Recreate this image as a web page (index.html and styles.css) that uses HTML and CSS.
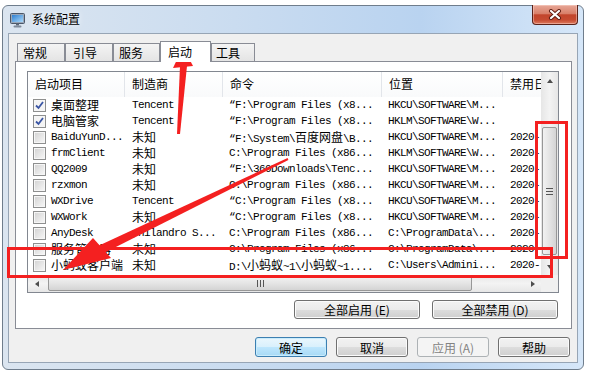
FILE: index.html
```html
<!DOCTYPE html>
<html lang="zh-CN">
<head>
  <meta charset="UTF-8">
  <title>系统配置</title>
  <link rel="stylesheet" href="styles.css">
</head>
<body>

  <div class="window">
    <div class="titlebar">
      <svg class="app-icon" width="16" height="16" viewBox="0 0 16 16">
        <defs>
          <linearGradient id="scr" x1="0" y1="0" x2="1" y2="1">
            <stop offset="0" stop-color="#2f7fd0"/>
            <stop offset="1" stop-color="#a9d8fa"/>
          </linearGradient>
        </defs>
        <rect x="0.5" y="1.5" width="14" height="10" rx="1" fill="#9aa7b8" stroke="#4a5668"/>
        <rect x="2" y="3" width="11" height="7" fill="url(#scr)"/>
        <rect x="6" y="11.5" width="3" height="2" fill="#5d6878"/>
        <rect x="3.5" y="13.5" width="8" height="2" rx="1" fill="#7f8a9a"/>
      </svg>
      <span class="title">系统配置</span>
      <div class="close-btn">
        <svg width="14" height="11" viewBox="0 0 14 11">
          <path d="M3 2 L11 9 M11 2 L3 9" stroke="#5b1a10" stroke-width="4" stroke-linecap="round"/>
          <path d="M3 2 L11 9 M11 2 L3 9" stroke="#ffffff" stroke-width="2.2" stroke-linecap="round"/>
        </svg>
      </div>
    </div>

    <div class="client">
      <div class="tabs">
        <div class="tab t1">常规</div>
        <div class="tab t2">引导</div>
        <div class="tab t3">服务</div>
        <div class="tab t4 active">启动</div>
        <div class="tab t5">工具</div>
      </div>

      <div class="panel">
        <div class="listview">
          <div class="lv-main">
            <div class="lv-row lv-head">
              <div class="hcell">启动项目</div>
              <div class="hcell">制造商</div>
              <div class="hcell">命令</div>
              <div class="hcell">位置</div>
              <div class="hcell">禁用日</div>
            </div>

            <div class="lv-row">
              <div class="cell first"><span class="check on"></span>桌面整理</div>
              <div class="cell m">Tencent</div>
              <div class="cell m">“F:\Program Files (x8...</div>
              <div class="cell m">HKCU\SOFTWARE\M...</div>
              <div class="cell m"></div>
            </div>
            <div class="lv-row">
              <div class="cell first"><span class="check on"></span>电脑管家</div>
              <div class="cell m">Tencent</div>
              <div class="cell m">“F:\Program Files (x8...</div>
              <div class="cell m">HKLM\SOFTWARE\W...</div>
              <div class="cell m"></div>
            </div>
            <div class="lv-row">
              <div class="cell first m"><span class="check"></span>BaiduYunD...</div>
              <div class="cell">未知</div>
              <div class="cell"><span class="m">“F:\System\</span>百度网盘<span class="m">\B...</span></div>
              <div class="cell m">HKCU\SOFTWARE\M...</div>
              <div class="cell m">2020-</div>
            </div>
            <div class="lv-row">
              <div class="cell first m"><span class="check"></span>frmClient</div>
              <div class="cell">未知</div>
              <div class="cell m">C:\Program Files (x86...</div>
              <div class="cell m">HKLM\SOFTWARE\W...</div>
              <div class="cell m">2020-</div>
            </div>
            <div class="lv-row">
              <div class="cell first m"><span class="check"></span>QQ2009</div>
              <div class="cell">未知</div>
              <div class="cell m">“F:\360Downloads\Tenc...</div>
              <div class="cell m">HKCU\SOFTWARE\M...</div>
              <div class="cell m">2020-</div>
            </div>
            <div class="lv-row">
              <div class="cell first m"><span class="check"></span>rzxmon</div>
              <div class="cell">未知</div>
              <div class="cell m">C:\Program Files (x86...</div>
              <div class="cell m">HKCU\SOFTWARE\M...</div>
              <div class="cell m">2020-</div>
            </div>
            <div class="lv-row">
              <div class="cell first m"><span class="check"></span>WXDrive</div>
              <div class="cell m">Tencent</div>
              <div class="cell m">“C:\Program Files (x8...</div>
              <div class="cell m">HKCU\SOFTWARE\M...</div>
              <div class="cell m">2020-</div>
            </div>
            <div class="lv-row">
              <div class="cell first m"><span class="check"></span>WXWork</div>
              <div class="cell">未知</div>
              <div class="cell m">“C:\Program Files (x8...</div>
              <div class="cell m">HKCU\SOFTWARE\M...</div>
              <div class="cell m">2020-</div>
            </div>
            <div class="lv-row">
              <div class="cell first m"><span class="check"></span>AnyDesk</div>
              <div class="cell m">philandro S...</div>
              <div class="cell m">C:\Program Files (x86...</div>
              <div class="cell m">C:\ProgramData\...</div>
              <div class="cell m">2020-</div>
            </div>
            <div class="lv-row">
              <div class="cell first"><span class="check"></span>服务管理器</div>
              <div class="cell">未知</div>
              <div class="cell m">C:\Program Files (x86...</div>
              <div class="cell m">C:\ProgramData\...</div>
              <div class="cell m">2020-</div>
            </div>
            <div class="lv-row">
              <div class="cell first"><span class="check"></span>小蚂蚁客户端</div>
              <div class="cell">未知</div>
              <div class="cell"><span class="m">D:\</span>小蚂蚁<span class="m">~1\</span>小蚂蚁<span class="m">~1....</span></div>
              <div class="cell m">C:\Users\Admini...</div>
              <div class="cell m">2020-</div>
            </div>
          </div>

          <div class="vscroll">
            <div class="sb-btn"><span class="tri up"></span></div>
            <div class="v-track">
              <div class="v-thumb"><span class="grip-h"></span></div>
            </div>
            <div class="sb-btn"><span class="tri down"></span></div>
          </div>

          <div class="hscroll">
            <div class="sb-btn"><span class="tri left"></span></div>
            <div class="h-track">
              <div class="h-thumb"><span class="grip-v"></span></div>
            </div>
            <div class="sb-btn"><span class="tri right"></span></div>
          </div>

          <div class="corner"></div>
        </div>

        <div class="panel-buttons">
          <button class="btn wide">全部启用 (E)</button>
          <button class="btn wide">全部禁用 (D)</button>
        </div>
      </div>

      <div class="dialog-buttons">
        <button class="btn default">确定</button>
        <button class="btn">取消</button>
        <button class="btn disabled">应用 (A)</button>
        <button class="btn">帮助</button>
      </div>
    </div>
  </div>

  <!-- red marks drawn over the screenshot -->
  <svg class="marks" width="599" height="378" viewBox="0 0 599 378">
    <polygon points="183,47 173,68 193,66" fill="#f42020"/>
    <polygon points="180,66 187,66 180,134 177,134" fill="#f42020"/>
    <polygon points="63,270 93,238 111,258" fill="#f42020"/>
    <polygon points="98,246 287.6,158 288.4,160 102,254" fill="#f42020"/>
    <rect x="536.5" y="122.5" width="30" height="135" fill="none" stroke="#f42020" stroke-width="3"/>
    <rect x="8.5" y="248.5" width="543" height="28" fill="none" stroke="#f42020" stroke-width="3"/>
  </svg>

</body>
</html>
```

FILE: styles.css
```css
body {
  margin: 0;
  width: 599px;
  height: 378px;
  overflow: hidden;
  position: relative;
  background-color: #ffffff;
  font-family: "Noto Sans CJK SC", sans-serif;
  font-size: 12px;
  color: #000;
}

.window {
  margin: 5px 0 0 2px;
  width: 580px;
  height: 363px;
  border: 1px solid #6f7d8c;
  border-radius: 6px;
  background: linear-gradient(90deg, #dbe5f0 0%, #cadcf0 40%, #b9d3f0 72%, #d6e7f9 100%);
  display: flex;
  flex-direction: column;
}

.titlebar {
  height: 27px;
  display: flex;
  align-items: center;
  padding-left: 7px;
}

.app-icon {
  flex: none;
}

.title {
  margin-left: 6px;
  margin-bottom: 3px;
  font-size: 12px;
  text-shadow: 0 0 6px #ffffff;
}

.close-btn {
  margin-left: auto;
  margin-right: 5px;
  margin-top: -1px;
  align-self: flex-start;
  width: 46px;
  height: 20px;
  box-sizing: border-box;
  border: 1px solid #5a2219;
  border-top: none;
  border-radius: 0 0 4px 4px;
  background: linear-gradient(#e7a898 0%, #d9806a 45%, #c2452c 52%, #c64b31 78%, #dd7a5e 100%);
  box-shadow: inset 0 0 0 1px rgba(255, 220, 210, 0.45);
  display: flex;
  align-items: center;
  justify-content: center;
}

.client {
  flex: 1;
  margin: 0 5px 6px;
  background-color: #f0f0f0;
  border: 1px solid #97a5b5;
  padding: 7px 5px 0 6px;
  display: flex;
  flex-direction: column;
}

/* tabs */
.tabs {
  height: 20px;
  display: flex;
  align-items: flex-end;
  padding-left: 2px;
  position: relative;
  z-index: 1;
}

.tab {
  height: 18px;
  box-sizing: border-box;
  border: 1px solid #898c95;
  border-bottom: none;
  padding-left: 5px;
  line-height: 17px;
  background: linear-gradient(#f4f4f4, #e4e4e4);
}

.t1 { width: 48px; }
.t2 { width: 48px; padding-left: 7px; }
.t3 { width: 47px; }
.t4 { width: 51px; padding-left: 7px; }
.t5 { width: 44px; padding-left: 4px; }

.tab.active {
  height: 21px;
  margin-bottom: -1px;
  line-height: 19px;
  background: #ffffff;
}

.panel {
  height: 268px;
  box-sizing: border-box;
  border: 1px solid #898c95;
  background-color: #ffffff;
  padding: 9px 12px 0 11px;
}

/* list view */
.listview {
  width: 532px;
  height: 222px;
  box-sizing: border-box;
  border: 1px solid #828790;
  display: grid;
  grid-template-columns: 513px 17px;
  grid-template-rows: 203px 17px;
}

.lv-main {
  overflow: hidden;
}

.lv-row {
  display: grid;
  grid-template-columns: 97px 98px 159px 121px 80px;
  height: 16px;
  line-height: 16px;
  white-space: nowrap;
}

.lv-head {
  height: 25px;
  line-height: 24px;
  background: linear-gradient(#ffffff, #f9fafb);
}

.hcell {
  padding-left: 7px;
  border-right: 1px solid #e2e5ea;
  overflow: hidden;
}

.cell {
  padding-left: 7px;
  overflow: hidden;
}

.cell:nth-child(3),
.cell:nth-child(4) {
  padding-left: 6px;
}

.cell.first {
  padding-left: 5px;
  display: flex;
  align-items: center;
}

.m {
  font-family: "Liberation Mono", monospace;
  font-size: 11px;
  letter-spacing: -0.6px;
}

.check {
  flex: none;
  width: 13px;
  height: 13px;
  box-sizing: border-box;
  margin-right: 5px;
  border: 1px solid #8e8f8f;
  box-shadow: inset 0 0 0 1px #f6f6f6;
  background: linear-gradient(135deg, #d2d2d2, #f8f8f8);
}

.check.on {
  background: #f4f4f4 url("data:image/svg+xml;utf8,<svg xmlns='http://www.w3.org/2000/svg' width='11' height='11'><path d='M2 5.5 L4.5 8 L9 2' fill='none' stroke='%233a55a4' stroke-width='1.8'/></svg>") no-repeat center;
}

/* scroll bars */
.vscroll {
  display: flex;
  flex-direction: column;
  background: linear-gradient(90deg, #e6e6e6, #f3f3f3 50%, #e6e6e6);
}

.hscroll {
  display: flex;
  background: linear-gradient(#e6e6e6, #f3f3f3 50%, #e6e6e6);
}

.corner {
  background-color: #f0f0f0;
}

.sb-btn {
  flex: none;
  width: 17px;
  height: 17px;
  display: flex;
  align-items: center;
  justify-content: center;
}

.v-track {
  flex: 1;
  padding: 38px 1px 0;
}

.v-thumb {
  height: 128px;
  box-sizing: border-box;
  border: 1px solid #979797;
  border-radius: 2px;
  background: linear-gradient(90deg, #f2f2f2, #e4e4e4 50%, #d4d4d4);
  display: flex;
  align-items: center;
  justify-content: center;
}

.h-track {
  flex: 1;
  padding: 1px 0 1px 3px;
}

.h-thumb {
  width: 424px;
  height: 15px;
  box-sizing: border-box;
  border: 1px solid #979797;
  border-radius: 2px;
  background: linear-gradient(#f2f2f2, #e4e4e4 50%, #d4d4d4);
  display: flex;
  align-items: center;
  justify-content: center;
}

.grip-h {
  width: 7px;
  height: 5px;
  border-top: 1px solid #555;
  border-bottom: 1px solid #555;
  background: linear-gradient(transparent 2px, #555 2px, #555 3px, transparent 3px);
}

.grip-v {
  width: 5px;
  height: 7px;
  border-left: 1px solid #555;
  border-right: 1px solid #555;
  background: linear-gradient(90deg, transparent 2px, #555 2px, #555 3px, transparent 3px);
}

.tri {
  width: 0;
  height: 0;
}

.tri.up {
  border-left: 3.5px solid transparent;
  border-right: 3.5px solid transparent;
  border-bottom: 4px solid #4d4d4d;
}

.tri.down {
  border-left: 3.5px solid transparent;
  border-right: 3.5px solid transparent;
  border-top: 4px solid #4d4d4d;
}

.tri.left {
  border-top: 3.5px solid transparent;
  border-bottom: 3.5px solid transparent;
  border-right: 4px solid #4d4d4d;
}

.tri.right {
  border-top: 3.5px solid transparent;
  border-bottom: 3.5px solid transparent;
  border-left: 4px solid #4d4d4d;
}

/* buttons */
.panel-buttons {
  margin-top: 7px;
  width: 531px;
  display: flex;
  justify-content: flex-end;
  gap: 12px;
}

.dialog-buttons {
  margin-top: 8px;
  margin-right: 2px;
  display: flex;
  justify-content: flex-end;
  gap: 9px;
}

.btn {
  width: 72px;
  height: 20px;
  padding: 0;
  border: 1px solid #707070;
  border-radius: 3px;
  background: linear-gradient(#f2f2f2 0%, #ebebeb 50%, #dddddd 51%, #cfcfcf 100%);
  box-shadow: inset 0 0 0 1px #fbfbfb;
  font-family: "Noto Sans CJK SC", sans-serif;
  font-size: 12px;
  line-height: 17px;
  color: #000;
}

.btn.wide {
  width: 126px;
  height: 19px;
}

.btn.default {
  border-color: #3c7fb1;
  background: linear-gradient(#eaf6fd 0%, #d9f0fc 50%, #bee6fd 51%, #a7d9f5 100%);
  box-shadow: inset 0 0 0 1px #c9ecfc;
}

.btn.disabled {
  border-color: #adb2b5;
  background: #f4f4f4;
  box-shadow: none;
  color: #838383;
}

.marks {
  position: absolute;
  left: 0;
  top: 0;
  pointer-events: none;
}
```
